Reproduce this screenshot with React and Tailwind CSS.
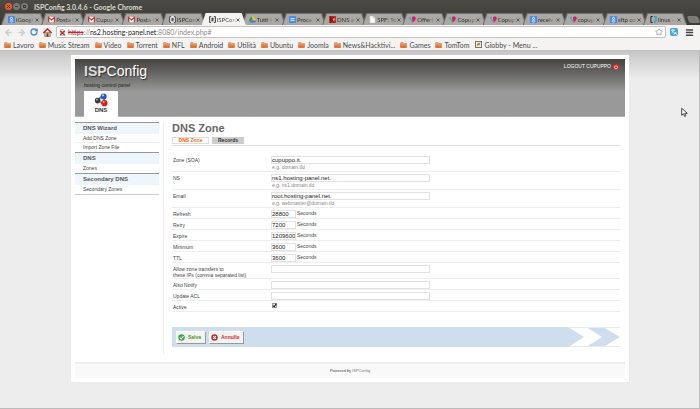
import React from "react";
import { ArrowLeft, ArrowRight, RotateCw, Star, Menu, Languages } from "lucide-react";

function FavGoogle() {
  return (
    <svg viewBox="0 0 8 8" className="size-[7px] shrink-0">
      <rect width="8" height="8" rx="1" fill="#4a86e8" />
      <circle cx="4" cy="2.8" r="1.3" fill="none" stroke="#fff" />
      <ellipse cx="4" cy="5.9" rx="1.7" ry="1.1" fill="none" stroke="#fff" strokeWidth="0.8" />
    </svg>
  );
}

function FavMail() {
  return (
    <svg viewBox="0 0 8 8" className="size-[7px] shrink-0">
      <rect y="1" width="8" height="6" fill="#fff" />
      <path d="M0.7 7V1.6L4 4.6 7.3 1.6V7" fill="none" stroke="#d8352a" strokeWidth="1.4" />
    </svg>
  );
}

function FavPanel() {
  return (
    <svg viewBox="0 0 8 8" className="size-[7px] shrink-0">
      <rect width="8" height="8" fill="#f4f4f4" />
      <path d="M2.5 0.7H0.7V7.3H2.5M5.5 0.7H7.3V7.3H5.5" fill="none" stroke="#222" />
      <rect x="2.7" y="2" width="2.6" height="4" fill="#555" />
    </svg>
  );
}

function FavDrive() {
  return (
    <svg viewBox="0 0 8 8" className="size-[7px] shrink-0">
      <path d="M2.8 0.6H5.2L8 5.2H5.5Z" fill="#fbc90e" />
      <path d="M2.8 0.6L4.1 2.8 1.3 7.4 0 5.2Z" fill="#1a9d57" />
      <path d="M2.6 5.2H8L6.7 7.4H1.3Z" fill="#3f78e0" />
    </svg>
  );
}

function FavDocs() {
  return (
    <svg viewBox="0 0 8 8" className="size-[7px] shrink-0">
      <rect width="8" height="8" rx="1" fill="#4a8af4" />
      <path d="M1.8 3H6.2M1.8 5H6.2" stroke="#fff" strokeWidth="1.1" />
    </svg>
  );
}

function FavDns() {
  return (
    <svg viewBox="0 0 8 8" className="size-[7px] shrink-0">
      <rect width="8" height="8" fill="#cf2f22" />
      <path d="M2 0V8M2 4L6 1M3 4L6 8" stroke="#4a1410" strokeWidth="1.1" fill="none" />
      <rect x="4.6" y="3" width="2" height="2" fill="#f0b9b3" />
    </svg>
  );
}

function FavFile() {
  return (
    <svg viewBox="0 0 8 8" className="size-[7px] shrink-0">
      <path d="M1 0H5L7 2V8H1Z" fill="#fafafa" stroke="#bbb" strokeWidth="0.5" />
      <path d="M5 0V2H7" fill="none" stroke="#999" strokeWidth="0.5" />
    </svg>
  );
}

function FavHeart() {
  return (
    <svg viewBox="0 0 8 8" className="size-[7px] shrink-0">
      <path d="M0.3 2.6C0.3 1 1.4 0.4 2.4 0.8L3.6 4 4 7.6Z" fill="#17b4d8" />
      <path d="M2 0.7L4.2 1.2 4.6 5 4 7.6Z" fill="#f5d21a" />
      <path d="M3.2 1.4C4.6 0 7.8 0.2 7.8 2.8 7.6 4.6 5.6 6 4 7.7Z" fill="#e2137f" />
    </svg>
  );
}

function FavLinux() {
  return (
    <svg viewBox="0 0 8 8" className="size-[7px] shrink-0">
      <path d="M3 0.6H1V7.4H3" fill="none" stroke="#222" strokeWidth="1.1" />
      <path d="M4.6 0.6H6.8V5.5L5 7.6" fill="none" stroke="#1aa3d8" strokeWidth="1.5" />
    </svg>
  );
}

const tabs = [
  [FavGoogle, "iGoogl"],
  [FavMail, "Posta i"],
  [FavMail, "Cupup"],
  [FavMail, "Posta i"],
  [FavPanel, "ISPCon"],
  [FavPanel, "ISPCon", true],
  [FavDrive, "Tutti i"],
  [FavDocs, "Proce"],
  [FavDns, "DNS e"],
  [FavFile, "SPF: To"],
  [FavHeart, "Offert"],
  [FavHeart, "Copup"],
  [FavHeart, "Copup"],
  [FavGoogle, "receiv"],
  [FavHeart, "copup"],
  [FavGoogle, "sftp co"],
  [FavLinux, "linux -"],
];

const bookmarks = [
  "Lavoro",
  "Music Stream",
  "Video",
  "Torrent",
  "NFL",
  "Android",
  "Utilità",
  "Ubuntu",
  "Joomla",
  "News&Hacktivi...",
  "Games",
  "TomTom",
];

function BrowserTab({ icon: Icon, title, active }) {
  return (
    <div
      className={
        "-mr-1 min-w-0 flex-1 px-px pt-px [clip-path:polygon(0_100%,4px_0,calc(100%-4px)_0,100%_100%)] " +
        (active ? "z-10 bg-[#f4f3f2]" : "bg-[#6f6e6a]")
      }
    >
      <div
        className={
          "flex h-[11px] items-center justify-between pr-[5px] pl-[6px] [clip-path:polygon(0_100%,4px_0,calc(100%-4px)_0,100%_100%)] " +
          (active ? "bg-[#f4f3f2] text-[#444]" : "bg-[#a9a8a5] text-[#333]")
        }
      >
        <div className="flex items-center gap-px">
          <Icon />
          <span className="whitespace-nowrap [mask-image:linear-gradient(to_right,#000_60%,#0004)]">{title}</span>
        </div>
        <button aria-label="Close tab" className="flex size-[5px] shrink-0 items-center justify-center">
          <svg viewBox="0 0 4 4" className="size-[4px]">
            <path d="M0.5 0.5L3.5 3.5M3.5 0.5L0.5 3.5" stroke="#555" strokeWidth="0.9" />
          </svg>
        </button>
      </div>
    </div>
  );
}

function FolderIcon() {
  return (
    <svg viewBox="0 0 8 7" className="h-[6px] w-[7px] shrink-0">
      <path d="M0.5 0.5H3.5L4 1.2H7.5V6.5H0.5Z" fill="#b9522a" />
      <rect x="1.2" y="1.6" width="5.8" height="1.4" fill="#f8d7c0" />
      <path d="M0.5 2.8H7.5V6.5H0.5Z" fill="#ee8337" />
      <path d="M0.5 5.3H7.5V6.5H0.5Z" fill="#d95a2b" />
    </svg>
  );
}

function Chrome() {
  return (
    <header className="font-['Lato','Open_Sans',sans-serif] text-[6px] leading-[8px]">
      <div className="bg-linear-to-b from-[#4b4a45] to-[#3c3b37]">
        <div className="flex h-[13px] items-center pl-[5px]">
          <div className="flex gap-px">
            <button aria-label="Close window" className="flex size-[7px] items-center justify-center rounded-full bg-[#ee5a29]">
              <svg viewBox="0 0 4 4" className="size-[3px]">
                <path d="M0 0L4 4M4 0L0 4" stroke="#4a2010" />
              </svg>
            </button>
            <button aria-label="Minimize window" className="flex size-[7px] items-center justify-center rounded-full bg-[#7b7a74]">
              <span className="h-px w-[3px] bg-[#3c3b37]" />
            </button>
            <button aria-label="Maximize window" className="flex size-[7px] items-center justify-center rounded-full bg-[#7b7a74]">
              <span className="size-[3px] border border-[#3c3b37]" />
            </button>
          </div>
          <span className="ml-[6px] text-[7px] font-bold text-[#dfdbd2]">ISPConfig 3.0.4.6 - Google Chrome</span>
        </div>
        <nav aria-label="Tabs" className="flex items-end pr-px pl-px">
          {tabs.map(([icon, title, active], i) => (
            <BrowserTab key={i} icon={icon} title={title} active={active} />
          ))}
          <button aria-label="New tab" className="mb-[2px] ml-[5px] h-[7px] w-[11px] skew-x-[20deg] rounded-xs bg-[#7a7975]" />
        </nav>
      </div>
      <div className="flex h-[14px] items-center bg-[#f4f3f2] pr-[6px] pl-[4px]">
        <button aria-label="Back">
          <ArrowLeft className="size-[9px] text-[#cfcdca]" strokeWidth={4} />
        </button>
        <button aria-label="Forward" className="ml-[4px]">
          <ArrowRight className="size-[9px] text-[#cfcdca]" strokeWidth={4} />
        </button>
        <button aria-label="Reload" className="ml-[4px]">
          <RotateCw className="size-[8px] text-[#4d8fd1]" strokeWidth={4} />
        </button>
        <button aria-label="Home" className="ml-[5px]">
          <svg viewBox="0 0 9 9" className="size-[9px]">
            <path d="M1.7 4.5H7.3V8.6H1.7Z" fill="#d9b79a" stroke="#7a4a35" strokeWidth="0.5" />
            <path d="M0.3 5L4.5 0.9 8.7 5" fill="none" stroke="#b8291c" strokeWidth="1.4" />
            <rect x="3.6" y="5.4" width="1.8" height="3.2" fill="#6a3a2a" />
          </svg>
        </button>
        <div className="ml-[4px] flex h-[12px] flex-1 items-center rounded-xs border border-[#c4c2bf] bg-white pr-[2px] pl-[2px]">
          <svg viewBox="0 0 8 8" className="size-[7px] shrink-0">
            <path d="M1.5 0.5H5L6.5 2V7.5H1.5Z" fill="#eee" stroke="#999" strokeWidth="0.6" />
            <path d="M1.5 2L6.5 7M6.5 2L1.5 7" stroke="#c8242b" strokeWidth="1.6" />
          </svg>
          <div role="textbox" aria-label="Address" className="ml-[2px] flex-1 whitespace-nowrap text-[7px] text-[#8b8b8b]">
            <span className="text-[#c8242b] line-through">https</span>://
            <span className="text-[#222]">ns2.hosting-panel.net</span>:8080/index.php#
          </div>
          <Star className="size-[8px] text-[#8b8b8b]" strokeWidth={2} />
        </div>
        <button aria-label="Translate" className="ml-[4px] rounded-xs bg-[#4aa3e0] p-px">
          <Languages className="size-[6px] text-white" strokeWidth={3} />
        </button>
        <button aria-label="Menu" className="ml-[7px]">
          <Menu className="size-[9px] text-[#444]" strokeWidth={4} />
        </button>
      </div>
      <nav
        aria-label="Bookmarks"
        className="flex h-[12px] items-center gap-[5px] border-b border-[#c2c0bd] bg-[#f4f3f2] pl-[4px] text-[7px] text-[#4a4a4a]"
      >
        {bookmarks.map((name) => (
          <a key={name} href="#" className="flex items-center gap-[2px] whitespace-nowrap">
            <FolderIcon />
            {name}
          </a>
        ))}
        <a href="#" className="flex items-center gap-[3px] whitespace-nowrap">
          <svg viewBox="0 0 8 8" className="size-[7px] shrink-0">
            <rect x="0.5" y="0.5" width="7" height="7" fill="#f6e6c8" stroke="#666" />
            <path d="M2 5.5C2.5 2 5 2 6 2.5 5.5 5 4 5 2 5.5Z" fill="#a87a35" />
          </svg>
          Giobby - Menu ...
        </a>
      </nav>
    </header>
  );
}

const menu = [
  ["DNS Wizard", ["Add DNS Zone", "Import Zone File"]],
  ["DNS", ["Zones"]],
  ["Secondary DNS", ["Secondary Zones"]],
];

function Sidebar() {
  return (
    <nav aria-label="DNS menu" className="w-[84px] shrink-0 self-start border-b border-[#ccc]">
      {menu.map(([title, items]) => (
        <section key={title} className="border-t border-[#999]">
          <h2 className="bg-[#eef6fd] pl-2 text-[6px] leading-[11px] font-bold text-[#555]">{title}</h2>
          <ul className="divide-y divide-[#eee]">
            {items.map((item) => (
              <li key={item} className="h-[9px] pl-2 leading-[9px]">
                <a href="#">{item}</a>
              </li>
            ))}
          </ul>
        </section>
      ))}
    </nav>
  );
}

const inputStyle = "block h-[8px] border border-[#e2e2e2] bg-white text-[6px] leading-[6px] text-[#222] outline-none";

const hinted = [
  ["zone", "Zone (SOA)", "cupuppo.it.", "e.g. domain.tld"],
  ["ns", "NS", "ns1.hosting-panel.net.", "e.g. ns1.domain.tld"],
  ["email", "Email", "root.hosting-panel.net.", "e.g. webmaster@domain.tld"],
];

const timings = [
  ["refresh", "Refresh", "28800"],
  ["retry", "Retry", "7200"],
  ["expire", "Expire", "1209600"],
  ["minimum", "Minimum", "3600"],
  ["ttl", "TTL", "3600"],
];

function Row({ id, label, className, children }) {
  return (
    <div className={"flex border-b border-[#eee] pt-[2px] " + className}>
      <label htmlFor={id} className="w-[99px] shrink-0 pt-px pl-[1px] leading-[6px] whitespace-pre-line">
        {label}
      </label>
      {children}
    </div>
  );
}

function ZoneForm() {
  return (
    <form className="mt-[8px]" onSubmit={(e) => e.preventDefault()}>
      {hinted.map(([id, label, value, hint]) => (
        <Row key={id} id={id} label={label} className="h-[18px]">
          <div>
            <input id={id} defaultValue={value} className={inputStyle + " w-[159px]"} />
            <p className="pl-px text-[5px] leading-[7px] text-[#888]">{hint}</p>
          </div>
        </Row>
      ))}
      {timings.map(([id, label, value]) => (
        <Row key={id} id={id} label={label} className="h-[11px]">
          <input id={id} defaultValue={value} className={inputStyle + " w-[25px]"} />
          <span className="ml-px leading-[6px]">Seconds</span>
        </Row>
      ))}
      <Row id="xfer" label={"Allow zone transfers to\nthese IPs (comma separated list)"} className="h-[16px]">
        <input id="xfer" className={inputStyle + " w-[159px]"} />
      </Row>
      <Row id="notify" label="Also Notify" className="h-[11px]">
        <input id="notify" className={inputStyle + " w-[159px]"} />
      </Row>
      <Row id="acl" label="Update ACL" className="h-[11px]">
        <input id="acl" className={inputStyle + " w-[159px]"} />
      </Row>
      <Row id="active" label="Active" className="h-[11px]">
        <input
          id="active"
          type="checkbox"
          defaultChecked
          className="peer ml-px size-[5px] appearance-none border border-[#999] bg-[#e8e8e8]"
        />
        <svg viewBox="0 0 6 6" className="pointer-events-none -ml-[5px] hidden size-[5px] peer-checked:block">
          <path d="M1 3L2.5 4.6 5.2 0.8" fill="none" stroke="#222" strokeWidth="1.3" />
        </svg>
      </Row>

      <div className="mt-[15px] flex h-[20px] items-center gap-[3px] bg-[#cfdeee] pl-[4px] font-bold">
        <button className="flex h-[13px] w-[30px] items-center gap-[3px] border border-t-white border-r-[#999] border-b-[#999] border-l-white bg-[#f3f3f3] pl-px text-[#4b9a1d]">
          <svg viewBox="0 0 8 8" className="size-[7px] shrink-0">
            <circle cx="4" cy="4" r="3.7" fill="#3aa648" />
            <path d="M2 4.2L3.6 5.7 6.2 2.4" fill="none" stroke="#fff" strokeWidth="1.2" />
          </svg>
          Salva
        </button>
        <button className="flex h-[13px] w-[35px] items-center gap-[3px] border border-t-white border-r-[#999] border-b-[#999] border-l-white bg-[#f3f3f3] pl-px text-[#d8281e]">
          <svg viewBox="0 0 8 8" className="size-[7px] shrink-0">
            <circle cx="4" cy="4" r="3.7" fill="#b9302f" />
            <path d="M2.5 2.5L5.5 5.5M5.5 2.5L2.5 5.5" stroke="#fff" strokeWidth="1.2" />
          </svg>
          Annulla
        </button>
        <svg viewBox="0 0 52 20" className="ml-auto h-[20px] w-[52px]">
          <path d="M0 0H18L34 10 18 20H0L16 10Z" fill="#fff" />
          <path d="M35 0H52V20H35L52 10Z" fill="#fff" />
          <path d="M0 0.5H52M0 19.5H52" stroke="#e3ecf5" />
        </svg>
      </div>
    </form>
  );
}

function DnsIcon() {
  return (
    <svg viewBox="0 0 14 14" className="size-[14px]">
      <path d="M3 7L9 3M4 8L10 11M10 4V10" stroke="#777" strokeWidth="1.6" />
      <circle cx="3.6" cy="7.6" r="2.8" fill="#3b3b3b" />
      <circle cx="2.8" cy="6.6" r="0.9" fill="#bbb" />
      <circle cx="9.6" cy="3.4" r="3" fill="#2158c8" />
      <circle cx="9" cy="2.3" r="1.1" fill="#b6d0f8" />
      <circle cx="10.4" cy="10.2" r="3.1" fill="#e01b1b" />
      <circle cx="9.6" cy="9.1" r="1" fill="#f9b3a8" />
    </svg>
  );
}

export default function App() {
  return (
    <div className="flex min-h-screen flex-col">
      <Chrome />
      <div className="relative flex-1 border-r border-b border-[#bbb] bg-[#ededed] bg-linear-to-b from-[#c6c6c6] to-[#ededed] to-[28px] pt-[4px] pb-[24px] font-['Liberation_Sans',Arial,sans-serif] text-[5px] leading-[7px] text-[#444]">
        <div className="mr-[70px] ml-[71px] bg-white p-[4px] shadow-[0_0_1px_#ddd]">
          <div className="flex h-[58px] justify-between border-b border-[#b4b4b4] bg-linear-to-b from-[#444340] to-[#999] to-[33px] pr-[6px] pl-[9px]">
            <div className="flex flex-col">
              <h1 className="pt-[4px] text-[14px] leading-[16px] text-white [text-shadow:1px_1px_1px_#333]">
                <span className="font-bold text-[#ddd]">ISP</span>Config
              </h1>
              <p className="mt-[3px] leading-[6px] text-[#222]">hosting control panel</p>
              <a href="#" className="mt-auto -mb-px flex h-[26px] w-[34px] flex-col items-center bg-white pt-[2px] text-[6px] leading-[7px] font-bold text-[#333]">
                <DnsIcon />
                DNS
              </a>
            </div>
            <a href="#" className="mt-[4px] flex h-[7px] items-center gap-[2px] text-white">
              LOGOUT CUPUPPO
              <svg viewBox="0 0 6 6" className="size-[6px]">
                <circle cx="3" cy="3" r="3" fill="#d9262b" />
                <path d="M3 1.2V3M1.9 2.1A1.6 1.6 0 1 0 4.1 2.1" fill="none" stroke="#fff" strokeWidth="0.7" />
              </svg>
            </a>
          </div>

          <div className="mt-[5px] flex">
            <Sidebar />
            <main className="ml-[4px] min-w-0 flex-1 border-l border-[#eee] pr-[5px] pb-[7px] pl-[8px]">
              <h2 className="text-[11px] leading-[12px] font-bold text-[#666]">DNS Zone</h2>
              <div className="mt-[3px] flex gap-[3px] border-b border-[#ddd] pb-px font-bold">
                <button className="h-[7px] w-[37px] border border-[#ddd] bg-white text-[5px] leading-[5px] text-[#f60]">DNS Zone</button>
                <button className="h-[7px] w-[32px] bg-[#ccc] text-[5px] leading-[7px] text-[#333]">Records</button>
              </div>
              <ZoneForm />
            </main>
          </div>

          <footer className="mt-[8px] h-[16px] border-t-2 border-[#ededed] bg-[#f9f9f9] pt-[4px] text-center text-[4px] leading-[6px] text-[#777]">
            <span className="text-[#444]">Powered by</span> ISPConfig
          </footer>
        </div>

        <svg viewBox="0 0 10 14" className="absolute top-[56px] right-[11px] h-[11px] w-[7px]">
          <path d="M1 1V11L3.6 8.8 5.2 12.6 7 11.8 5.4 8.2H9Z" fill="#fff" stroke="#222" strokeWidth="1.2" />
        </svg>
      </div>
    </div>
  );
}
